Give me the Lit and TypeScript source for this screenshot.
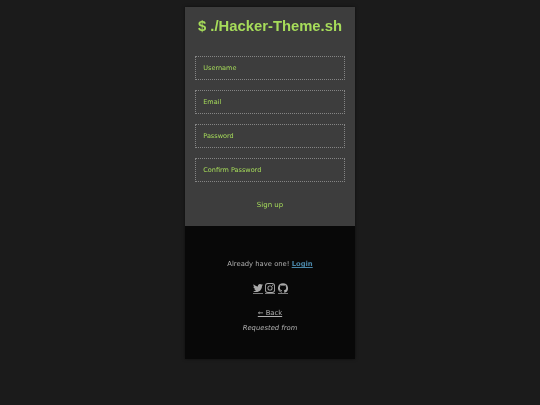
import { LitElement, html, css } from "lit";
import { customElement } from "lit/decorators.js";

@customElement("app-root")
export class AppRoot extends LitElement {
  static styles = css`
    :host {
      display: block;
      height: 405px;
      background: #1b1b1b;
      font-family: "DejaVu Sans", sans-serif;
      overflow: hidden;
    }
    .page { display: flex; flex-direction: column; align-items: center; padding-top: 7px; }
    .card { width: 169.5px; box-shadow: 0 0 3px rgba(0,0,0,.5); }
    .top { background: #3d3d3d; height: 219px; box-sizing: border-box; padding: 10px 10px 0; display: flex; flex-direction: column; }
    h1, input, button, .msg, .icons, .back, .req { filter: blur(.25px); }
    h1 { margin: 0; font: bold 14.8px/18px "Liberation Sans", sans-serif; color: #a6dc5a; text-align: center; white-space: nowrap; }
    form { display: flex; flex-direction: column; gap: 10px; margin-top: 21px; }
    input {
      display: block; box-sizing: border-box; width: 100%; height: 24px; margin: 0; padding: 0 7px;
      background: transparent; border: 1px dotted #858585; outline: none;
      font: 6.5px "DejaVu Sans", sans-serif; color: #a6dc5a;
    }
    input::placeholder { color: #a6dc5a; opacity: 1; }
    button {
      align-self: center; margin-top: 18px; padding: 0; background: none; border: none;
      font: 7px/10px "DejaVu Sans", sans-serif; color: #a6dc5a;
    }
    .bottom { background: #080808; height: 133px; box-sizing: border-box; padding-top: 34px; display: flex; flex-direction: column; align-items: center; color: #b0b0b0; font-size: 6.8px; line-height: 9px; }
    .login { color: #4a86a8; font-weight: bold; }
    .icons { display: flex; gap: 2.5px; margin-top: 14px; color: #a8a8a8; }
    .icons svg { display: block; width: 10px; height: 10px; fill: currentColor; }
    .icons a { display: block; color: inherit; border-bottom: 1px solid #7a7a7a; }
    .back { color: #b0b0b0; margin-top: 15px; }
    .req { font-style: italic; margin-top: 6px; }
  `;

  render() {
    return html`<div class="page"><div class="card">
      <div class="top">
        <h1>$ ./Hacker-Theme.sh</h1>
        <form>
          <input placeholder="Username" />
          <input placeholder="Email" />
          <input placeholder="Password" />
          <input placeholder="Confirm Password" />
        </form>
        <button>Sign up</button>
      </div>
      <div class="bottom">
        <div class="msg">Already have one! <a class="login" href="#">Login</a></div>
        <div class="icons">
          <a href="#"><svg viewBox="0 0 24 24"><path d="M23.95 4.57a10 10 0 0 1-2.82.77 4.96 4.96 0 0 0 2.16-2.72c-.95.55-2 .96-3.12 1.18a4.92 4.92 0 0 0-8.38 4.48C7.69 8.1 4.07 6.13 1.64 3.16a4.82 4.82 0 0 0-.66 2.48c0 1.71.87 3.21 2.19 4.1a4.9 4.9 0 0 1-2.23-.62v.06a4.92 4.92 0 0 0 3.95 4.83 5 5 0 0 1-2.21.08 4.94 4.94 0 0 0 4.6 3.42A9.87 9.87 0 0 1 0 19.54a14 14 0 0 0 7.56 2.21c9.05 0 14-7.5 14-13.98 0-.21 0-.42-.02-.63.96-.69 1.8-1.56 2.46-2.55z"/></svg></a>
          <a href="#"><svg viewBox="0 0 24 24"><path fill-rule="evenodd" d="M7 0h10a7 7 0 0 1 7 7v10a7 7 0 0 1-7 7H7a7 7 0 0 1-7-7V7a7 7 0 0 1 7-7zm0 2.2A4.8 4.8 0 0 0 2.2 7v10A4.8 4.8 0 0 0 7 21.8h10a4.8 4.8 0 0 0 4.8-4.8V7A4.8 4.8 0 0 0 17 2.2H7zM12 5.8a6.2 6.2 0 1 1 0 12.4 6.2 6.2 0 0 1 0-12.4zm0 2.2a4 4 0 1 0 0 8 4 4 0 0 0 0-8zm6.4-3.9a1.45 1.45 0 1 1 0 2.9 1.45 1.45 0 0 1 0-2.9z"/></svg></a>
          <a href="#"><svg viewBox="0 0 24 24"><path d="M12 .3a12 12 0 0 0-3.8 23.38c.6.11.82-.26.82-.58v-2.03c-3.34.72-4.04-1.61-4.04-1.61-.55-1.39-1.34-1.76-1.34-1.76-1.09-.74.08-.73.08-.73 1.2.09 1.84 1.24 1.84 1.24 1.07 1.83 2.81 1.3 3.5 1 .1-.78.42-1.31.76-1.61-2.67-.3-5.47-1.33-5.47-5.93 0-1.31.47-2.38 1.24-3.22-.14-.3-.54-1.52.1-3.18 0 0 1-.32 3.3 1.23a11.5 11.5 0 0 1 6 0c2.28-1.55 3.29-1.23 3.29-1.23.64 1.66.24 2.88.12 3.18a4.65 4.65 0 0 1 1.23 3.22c0 4.61-2.8 5.63-5.48 5.92.42.36.81 1.1.81 2.22v3.29c0 .32.22.7.82.58A12 12 0 0 0 12 .3z"/></svg></a>
        </div>
        <a class="back" href="#">← Back</a>
        <div class="req">Requested from</div>
      </div>
    </div></div>`;
  }
}
